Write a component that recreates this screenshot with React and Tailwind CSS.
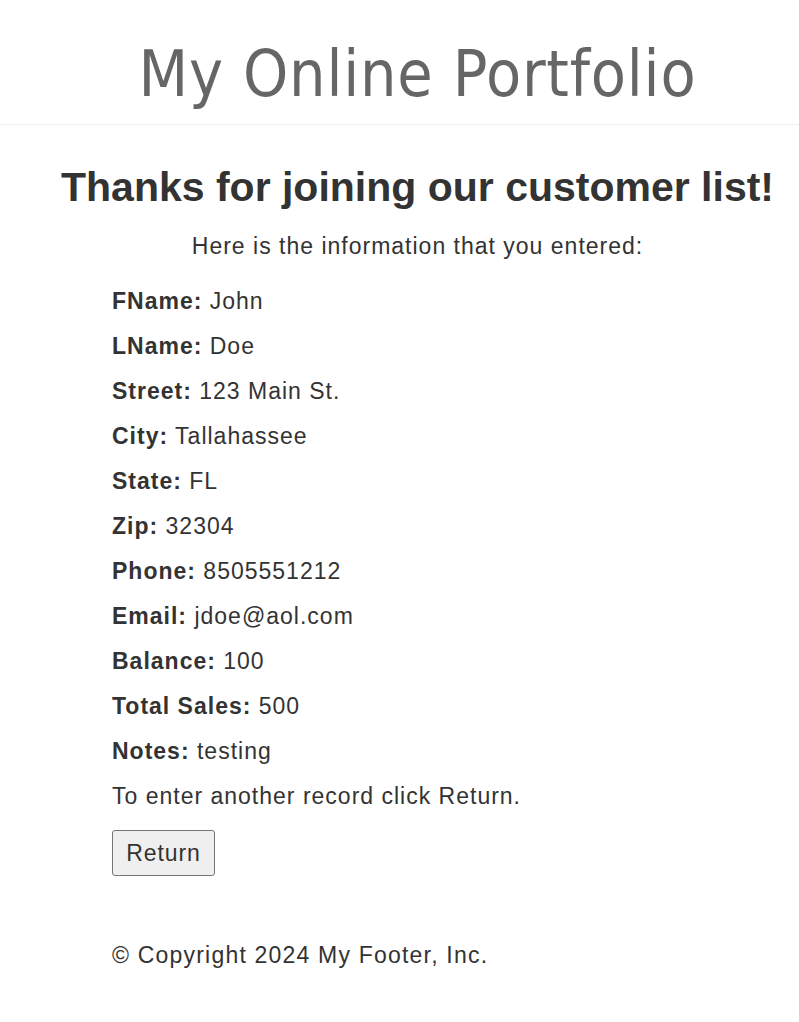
export default function App() {
  const rows = [
    ["FName:", "John"],
    ["LName:", "Doe"],
    ["Street:", "123 Main St."],
    ["City:", "Tallahassee"],
    ["State:", "FL"],
    ["Zip:", "32304"],
    ["Phone:", "8505551212"],
    ["Email:", "jdoe@aol.com"],
    ["Balance:", "100"],
    ["Total Sales:", "500"],
    ["Notes:", "testing"],
  ];
  return (
    <div className="min-h-[1022px] bg-white text-[#333] font-['Liberation_Sans',Arial,sans-serif]">
      <header className="h-[125px] border-b border-[#eee] flex items-start justify-center pl-[36px] pt-[36px]">
        <h1 className="text-[64px] leading-[76px] text-[#666] font-['DejaVu_Sans_Condensed','DejaVu_Sans',sans-serif] tracking-[0.8px]">My Online Portfolio</h1>
      </header>
      <main className="pl-[36px]">
        <h2 className="mt-[36px] text-center text-[41px] leading-[52px] font-bold">Thanks for joining our customer list!</h2>
        <p className="mt-[18px] text-center text-[23px] leading-[30px] tracking-[1px]">Here is the information that you entered:</p>
        <div className="pl-[76px] mt-[25px] text-[23px] tracking-[1px]">
          {rows.map(([k, v]) => (
            <div key={k} className="h-[45px] leading-[30px]">
              <b>{k}</b> {v}
            </div>
          ))}
          <div className="leading-[30px]">To enter another record click Return.</div>
          <button className="mt-[19px] h-[46px] w-[103px] text-[23px] tracking-[0.9px] bg-[#efefef] border border-[#767676] rounded-[3px]">Return</button>
          <div className="mt-[64px] leading-[30px] tracking-[1.2px]">© Copyright 2024 My Footer, Inc.</div>
        </div>
      </main>
    </div>
  );
}
